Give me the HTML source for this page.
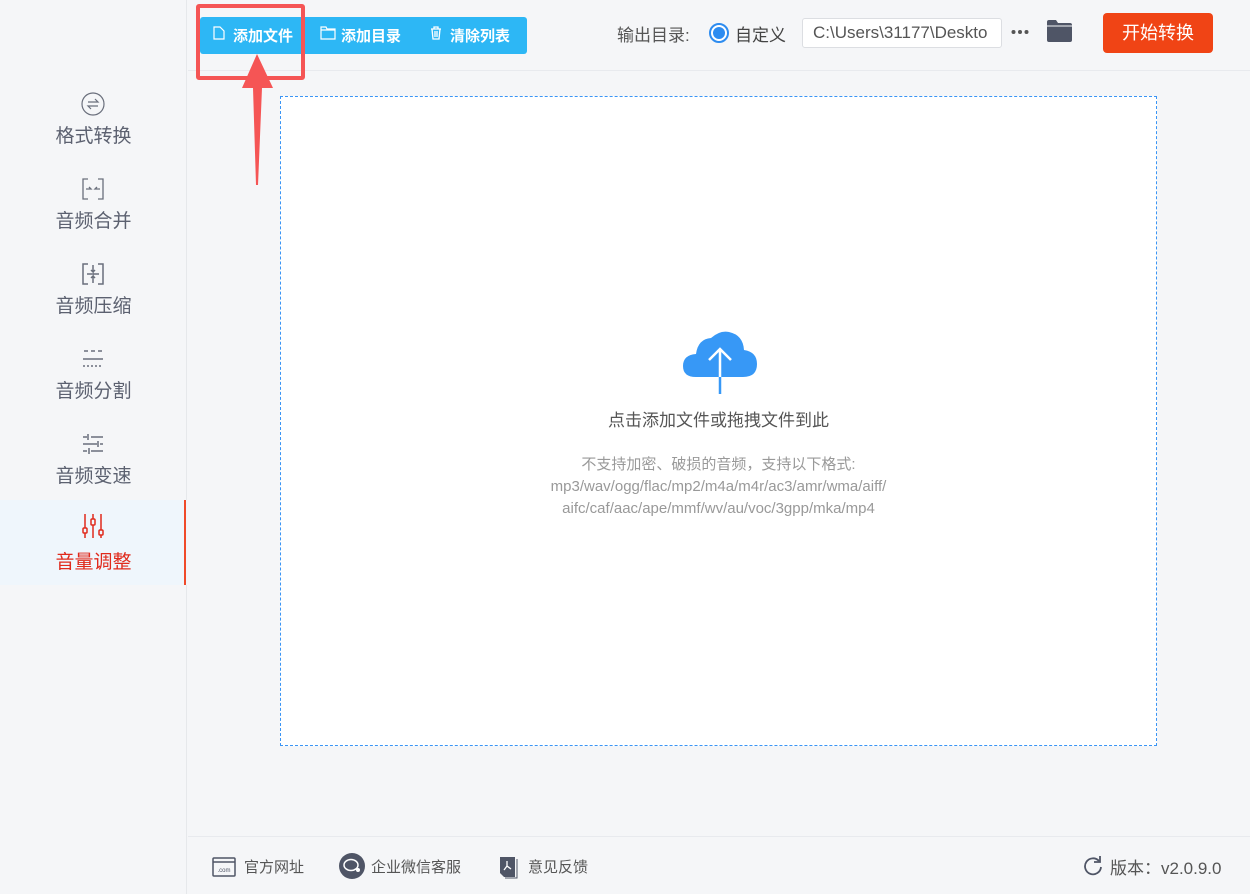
<!DOCTYPE html>
<html><head><meta charset="utf-8"><style>
*{margin:0;padding:0;box-sizing:border-box}
body{width:1250px;height:894px;background:#f5f6f8;font-family:"Liberation Sans","Noto Sans CJK SC",sans-serif;position:relative;overflow:hidden;color:#555}
.side{position:absolute;left:0;top:0;width:187px;height:894px;background:#f5f6f8;border-right:1px solid #e6e8eb}
.item{position:absolute;left:0;width:187px;height:85px;text-align:center;color:#5c6170;font-size:19px}
.item svg{position:absolute;left:81px;top:12px}
.item span{position:absolute;left:0;width:187px;top:41px}
.act{background:#eff6fc;color:#e02a1c}
.act:after{content:"";position:absolute;right:1px;top:0;width:2px;height:85px;background:#f04a2a}
.top{position:absolute;left:188px;top:0;right:0;height:71px;border-bottom:1px solid #e8eaee}
.btns{position:absolute;left:200px;top:17px;width:327px;height:37px;background:#2db7f5;border-radius:3px;color:#fff;font-size:15px;font-weight:bold}
.btns div{position:absolute;top:9px}
.drop{position:absolute;left:280px;top:96px;width:877px;height:650px;background:#fff;border:1px dashed #3a95f5}
.foot{position:absolute;left:188px;top:836px;right:0;height:58px;border-top:1px solid #e8eaee;font-size:15px;color:#555}
</style></head><body>
<div class="side">
 <div class="item" style="top:80px"><svg width="24" height="24" viewBox="0 0 24 24" fill="none" stroke="#6a6f7c" stroke-width="1.2"><circle cx="12" cy="12" r="11"/><path d="M7 10h10l-3-3M17 14H7l3 3"/></svg><span>格式转换</span></div>
 <div class="item" style="top:165px"><svg width="24" height="24" viewBox="0 0 24 24" fill="none" stroke="#6a6f7c" stroke-width="1.3"><path d="M7 2H2v20h5M17 2h5v20h-5M5 12h5l-2-2M19 12h-5l2-2"/></svg><span>音频合并</span></div>
 <div class="item" style="top:250px"><svg width="24" height="24" viewBox="0 0 24 24" fill="none" stroke="#6a6f7c" stroke-width="1.5"><path d="M7 2H2v20h5M17 2h5v20h-5M12 3v7l-2-2M12 10l2-2M6 12h12M12 21v-7l-2 2M12 14l2 2"/></svg><span>音频压缩</span></div>
 <div class="item" style="top:335px"><svg width="24" height="24" viewBox="0 0 24 24" fill="none" stroke="#6a6f7c" stroke-width="1.5"><path d="M3 4h4M10 4h4M17 4h4M2 12h20"/><path d="M2 19h20" stroke-dasharray="2 2"/></svg><span>音频分割</span></div>
 <div class="item" style="top:420px"><svg width="24" height="24" viewBox="0 0 24 24" fill="none" stroke="#6a6f7c" stroke-width="1.5"><path d="M2 5h4M10 5h12M7 2v6M2 12h14M19 12h3M17 9v6M2 19h4M10 19h12M8 16v6"/></svg><span>音频变速</span></div>
 <div class="item act" style="top:500px"><svg width="24" height="28" viewBox="0 0 24 28" fill="none" stroke="#e02a1c" stroke-width="1.5"><path d="M4 2v14M4 21v5M12 2v5M12 13v13M20 2v16M20 23v3"/><rect x="2" y="16" width="4" height="5" rx="1"/><rect x="10" y="7" width="4" height="6" rx="1"/><rect x="18" y="18" width="4" height="5" rx="1"/></svg><span style="top:47px">音量调整</span></div>
</div>
<div class="top"></div>
<div class="btns">
 <div style="left:13px"><svg width="12" height="14" viewBox="0 0 12 14" fill="none" stroke="#fff" stroke-width="1.2"><path d="M1 1h6l4 4v8H1z"/></svg></div>
 <div style="left:33px;top:8px">添加文件</div>
 <div style="left:120px"><svg width="16" height="14" viewBox="0 0 16 14" fill="none" stroke="#fff" stroke-width="1.2"><path d="M1 1h5l1 2h8v10H1zM1 4h14"/></svg></div>
 <div style="left:141px;top:8px">添加目录</div>
 <div style="left:230px"><svg width="12" height="14" viewBox="0 0 12 14" fill="none" stroke="#fff" stroke-width="1.3"><path d="M1 3h10M4 3V1h4v2M2 3l1 10h6l1-10M5 5v6M7 5v6"/></svg></div>
 <div style="left:250px;top:8px">清除列表</div>
</div>
<div style="position:absolute;left:196px;top:4px;width:109px;height:76px;border:4px solid #f55555;border-radius:3px"></div>
<svg style="position:absolute;left:240px;top:52px" width="36" height="135" viewBox="0 0 36 135"><path d="M17 2L2 36h11l3 97h2l4-97h11z" fill="#f55555"/></svg>
<div style="position:absolute;left:617px;top:21px;font-size:17px;color:#555">输出目录:</div>
<div style="position:absolute;left:709px;top:23px;width:20px;height:20px;border-radius:50%;border:2px solid #2d8cf0;background:#fff"><div style="position:absolute;left:2px;top:2px;width:12px;height:12px;border-radius:50%;background:#2d8cf0"></div></div>
<div style="position:absolute;left:735px;top:21px;font-size:17px;color:#444">自定义</div>
<div style="position:absolute;left:802px;top:18px;width:200px;height:30px;border:1px solid #dcdee2;border-radius:3px;background:#fff;font-size:17px;color:#555;padding:4px 0 0 10px;white-space:nowrap;overflow:hidden">C:\Users\31177\Deskto</div>
<svg style="position:absolute;left:1011px;top:29px" width="18" height="6"><circle cx="2.5" cy="3" r="2" fill="#555"/><circle cx="9" cy="3" r="2" fill="#555"/><circle cx="15.5" cy="3" r="2" fill="#555"/></svg>
<svg style="position:absolute;left:1047px;top:20px" width="25" height="22" viewBox="0 0 25 22"><path d="M0 2Q0 0 2 0h7l2 3h12q2 0 2 2v15q0 2-2 2H2q-2 0-2-2z" fill="#4f5566"/><path d="M0 6h25" stroke="#f5f6f8" stroke-width="1"/></svg>
<div style="position:absolute;left:1103px;top:13px;width:110px;height:40px;background:#f04415;border-radius:4px;color:#fff;font-size:18px;text-align:center;line-height:40px">开始转换</div>
<div class="drop">
 <svg style="position:absolute;left:401px;top:233px" width="76" height="64" viewBox="0 0 76 64"><path d="M14 47Q1 47 1 36q0-11 13-12Q16 9 29 8 38 0 47 2q14 3 15 18 13 2 13 14 0 13-14 13z" fill="#3798f6"/><path d="M38 64V19M27 30l11-11 11 11" stroke="#fff" stroke-width="2.5" fill="none"/><path d="M38 47v17" stroke="#3798f6" stroke-width="2.5"/></svg>
 <div style="position:absolute;left:0;width:100%;top:309px;text-align:center;font-size:17px;color:#555">点击添加文件或拖拽文件到此</div>
 <div style="position:absolute;left:0;width:100%;top:357px;text-align:center;font-size:15px;color:#999;line-height:22px">不支持加密、破损的音频，支持以下格式:<br>mp3/wav/ogg/flac/mp2/m4a/m4r/ac3/amr/wma/aiff/<br>aifc/caf/aac/ape/mmf/wv/au/voc/3gpp/mka/mp4</div>
</div>
<div class="foot">
 <svg style="position:absolute;left:24px;top:20px" width="24" height="20" viewBox="0 0 24 20"><rect x="1" y="1" width="22" height="18" rx="1" fill="none" stroke="#4f5566" stroke-width="1.5"/><path d="M1 5h22" stroke="#4f5566" stroke-width="1.5"/><text x="12" y="15" font-size="6" text-anchor="middle" fill="#4f5566" font-family="Liberation Sans">.com</text></svg>
 <div style="position:absolute;left:56px;top:19px">官方网址</div>
 <svg style="position:absolute;left:151px;top:16px" width="26" height="26" viewBox="0 0 26 26"><circle cx="13" cy="13" r="13" fill="#4f5566"/><ellipse cx="12" cy="12" rx="7" ry="5.5" fill="none" stroke="#fff" stroke-width="1.5"/><circle cx="19" cy="17" r="2" fill="#fff"/></svg>
 <div style="position:absolute;left:183px;top:19px">企业微信客服</div>
 <svg style="position:absolute;left:312px;top:18px" width="18" height="24" viewBox="0 0 18 24"><path d="M0 2h15v20H4l-4-4z" fill="#4f5566"/><path d="M17 4v19H5" stroke="#4f5566" fill="none"/><path d="M7 6v5l-3 4M7 11l4 3" stroke="#fff" stroke-width="1.3" fill="none"/></svg>
 <div style="position:absolute;left:340px;top:19px">意见反馈</div>
 <svg style="position:absolute;left:895px;top:19px" width="20" height="20" viewBox="0 0 20 20" fill="none" stroke="#4f5566" stroke-width="1.8"><path d="M16 5A8 8 0 1 0 18 11"/><path d="M11 4h6V-2" transform="translate(0 2)"/></svg>
 <div style="position:absolute;left:922px;top:17px;font-size:17px;color:#555">版本：v2.0.9.0</div>
</div>
</body></html>
